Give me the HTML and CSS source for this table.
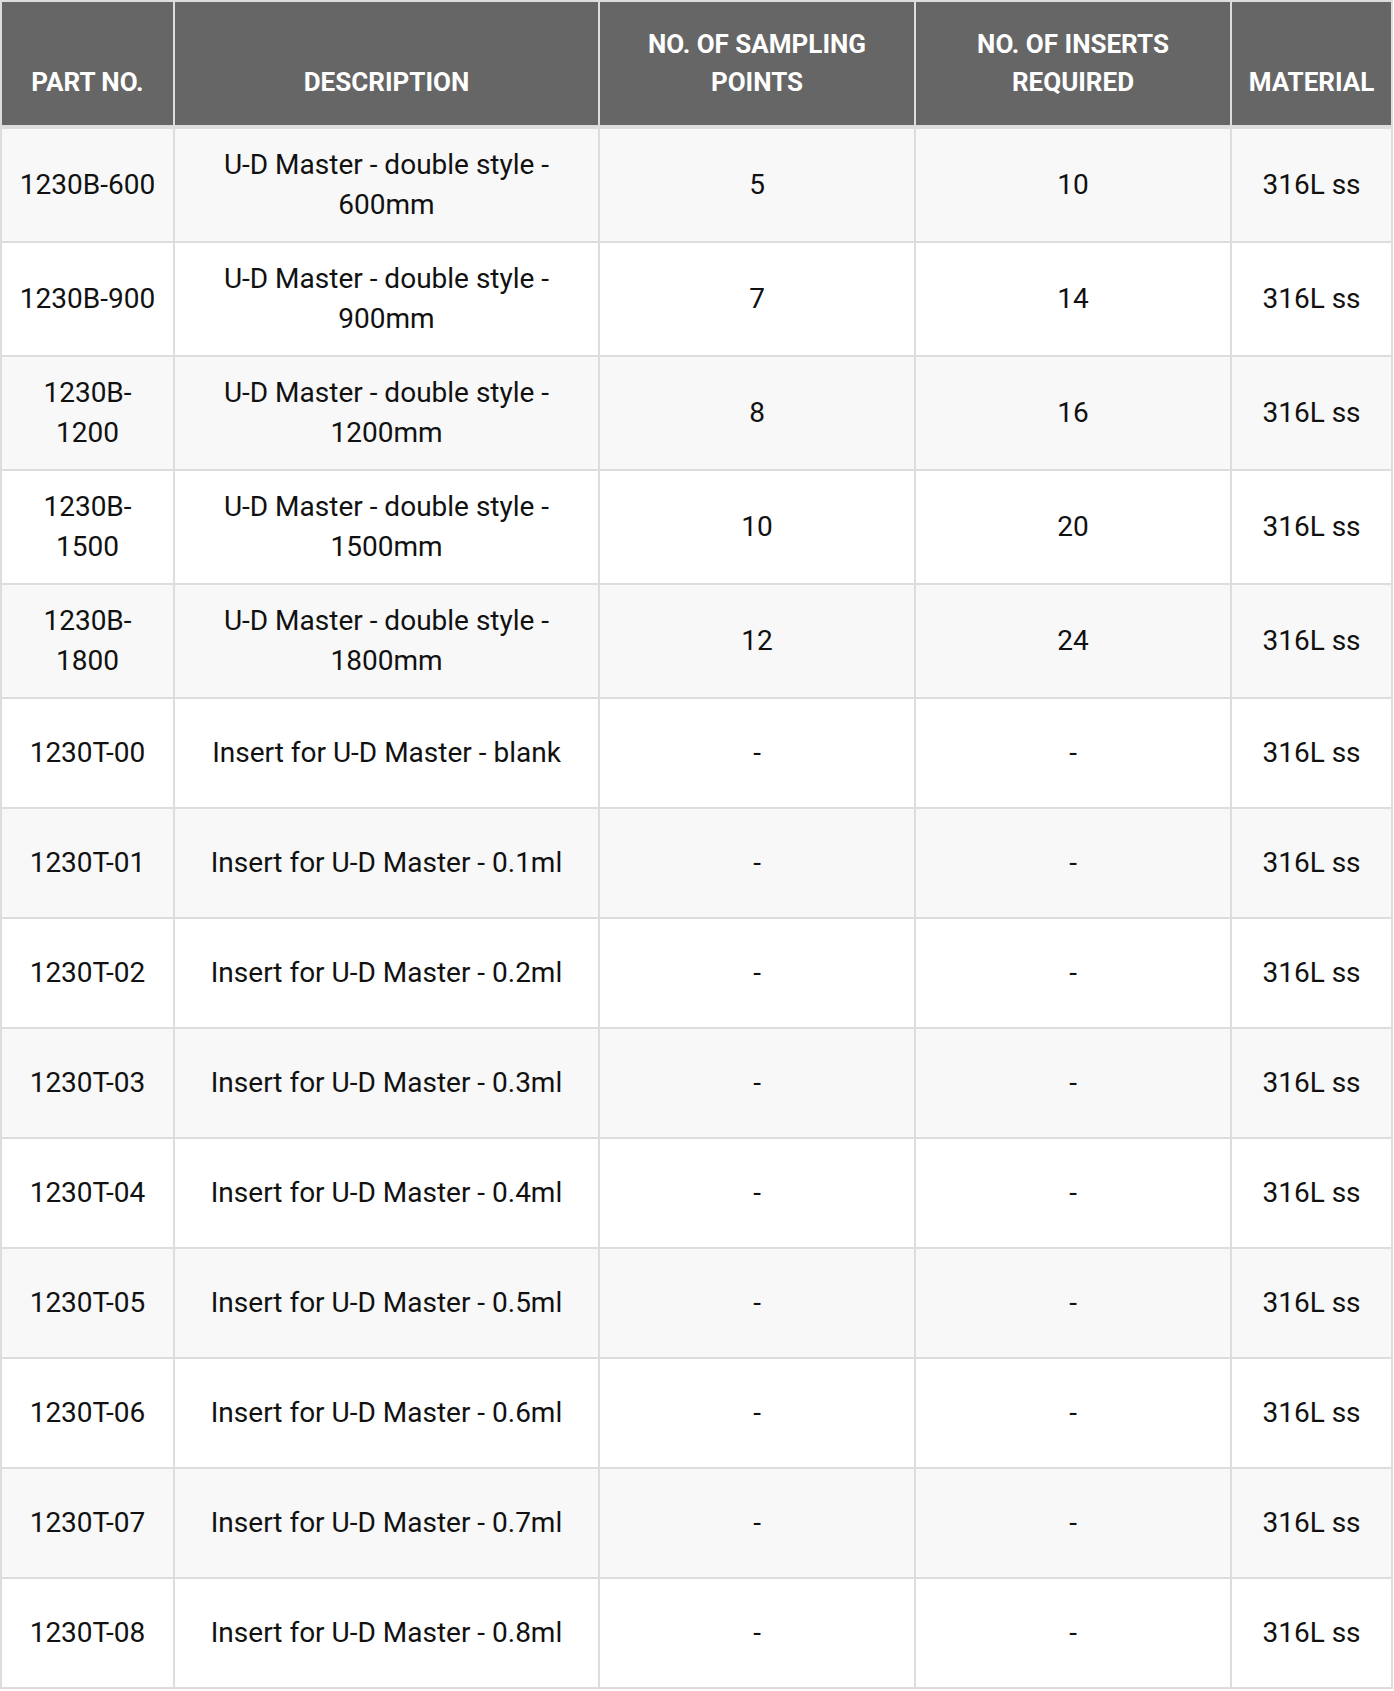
FILE: index.html
```html
<!DOCTYPE html>
<html lang="en">
<head>
<meta charset="utf-8">
<title>U-D Master parts</title>
<link rel="stylesheet" href="styles.css">
</head>
<body>
<table class="parts">
  <colgroup>
    <col class="c-part">
    <col class="c-desc">
    <col class="c-samp">
    <col class="c-ins">
    <col class="c-mat">
  </colgroup>
  <thead>
    <tr>
      <th>PART NO.</th>
      <th>DESCRIPTION</th>
      <th>NO. OF SAMPLING POINTS</th>
      <th>NO. OF INSERTS REQUIRED</th>
      <th>MATERIAL</th>
    </tr>
  </thead>
  <tbody>
    <tr><td>1230B-600</td><td>U-D Master - double style - 600mm</td><td>5</td><td>10</td><td>316L ss</td></tr>
    <tr><td>1230B-900</td><td>U-D Master - double style - 900mm</td><td>7</td><td>14</td><td>316L ss</td></tr>
    <tr><td>1230B-1200</td><td>U-D Master - double style - 1200mm</td><td>8</td><td>16</td><td>316L ss</td></tr>
    <tr><td>1230B-1500</td><td>U-D Master - double style - 1500mm</td><td>10</td><td>20</td><td>316L ss</td></tr>
    <tr><td>1230B-1800</td><td>U-D Master - double style - 1800mm</td><td>12</td><td>24</td><td>316L ss</td></tr>
    <tr><td>1230T-00</td><td>Insert for U-D Master - blank</td><td>-</td><td>-</td><td>316L ss</td></tr>
    <tr><td>1230T-01</td><td>Insert for U-D Master - 0.1ml</td><td>-</td><td>-</td><td>316L ss</td></tr>
    <tr><td>1230T-02</td><td>Insert for U-D Master - 0.2ml</td><td>-</td><td>-</td><td>316L ss</td></tr>
    <tr><td>1230T-03</td><td>Insert for U-D Master - 0.3ml</td><td>-</td><td>-</td><td>316L ss</td></tr>
    <tr><td>1230T-04</td><td>Insert for U-D Master - 0.4ml</td><td>-</td><td>-</td><td>316L ss</td></tr>
    <tr><td>1230T-05</td><td>Insert for U-D Master - 0.5ml</td><td>-</td><td>-</td><td>316L ss</td></tr>
    <tr><td>1230T-06</td><td>Insert for U-D Master - 0.6ml</td><td>-</td><td>-</td><td>316L ss</td></tr>
    <tr><td>1230T-07</td><td>Insert for U-D Master - 0.7ml</td><td>-</td><td>-</td><td>316L ss</td></tr>
    <tr><td>1230T-08</td><td>Insert for U-D Master - 0.8ml</td><td>-</td><td>-</td><td>316L ss</td></tr>
  </tbody>
</table>
</body>
</html>
```

FILE: styles.css
```css
html, body {
  margin: 0;
  padding: 0;
  background: #ffffff;
}

body {
  font-family: Roboto, "Liberation Sans", Arial, sans-serif;
  color: #111111;
}

.parts {
  width: 1393px;
  table-layout: fixed;
  border-collapse: collapse;
  border: 2px solid #dddddd;
}

.c-part { width: 173px; }
.c-desc { width: 425px; }
.c-samp { width: 316px; }
.c-ins  { width: 316px; }
.c-mat  { width: 161px; }

.parts th {
  background: #666666;
  color: #ffffff;
  font-weight: 700;
  font-size: 26px;
  line-height: 37.5px;
  text-transform: uppercase;
  text-align: center;
  vertical-align: bottom;
  padding: 24px 12px;
  border: 2px solid #dddddd;
  border-bottom-width: 4px;
}

.parts td {
  font-size: 28px;
  line-height: 40px;
  text-align: center;
  vertical-align: middle;
  padding: 16px 14px;
  height: 110px;
  box-sizing: border-box;
  border: 2px solid #dddddd;
}

.parts tbody tr:nth-child(odd) td {
  background: #f8f8f8;
}

.parts tbody tr:nth-child(even) td {
  background: #ffffff;
}
```
